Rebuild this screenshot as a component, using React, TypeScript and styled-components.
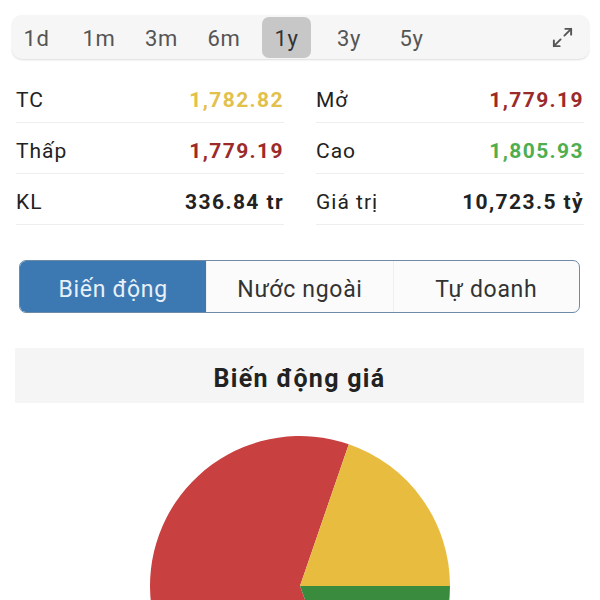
import React, { useState } from "react";
import styled, { createGlobalStyle } from "styled-components";
import { Maximize2 } from "lucide-react";

const Global = createGlobalStyle`
  html, body { margin: 0; padding: 0; background: #ffffff; }
  body { font-family: Roboto, "Noto Sans", Arial, sans-serif; color: #222; }
  * { box-sizing: border-box; }
`;

const Page = styled.div`
  width: 600px;
  padding-top: 15px;
  display: flex;
  flex-direction: column;
`;

const PeriodBar = styled.div`
  margin: 0 11px 0 12px;
  height: 44px;
  display: flex;
  align-items: center;
  gap: 13.5px;
  padding: 0 15px 0 0;
  background: #f6f6f6;
  border-radius: 10px;
  box-shadow: 0 1px 2px rgba(0, 0, 0, 0.14);
`;

const PeriodItem = styled.div<{ $active?: boolean }>`
  width: 49px;
  height: 41px;
  display: flex;
  align-items: center;
  justify-content: center;
  padding-top: 2px;
  font-size: 22px;
  letter-spacing: 0.6px;
  color: ${(p) => (p.$active ? "#333" : "#555")};
  background: ${(p) => (p.$active ? "#c7c7c7" : "transparent")};
  border-radius: 7px;
`;

const ExpandButton = styled.div`
  margin-left: auto;
  display: flex;
  align-items: center;
  color: #555;
`;

const Stats = styled.div`
  margin-top: 13px;
  padding: 0 16px;
  display: grid;
  grid-template-columns: 1fr 1fr;
  column-gap: 32px;
`;

const StatRow = styled.div`
  height: 51px;
  padding-top: 5px;
  display: flex;
  align-items: center;
  justify-content: space-between;
  border-bottom: 1px solid #eeeeee;
  font-size: 21px;
  letter-spacing: 1px;
`;

const StatLabel = styled.span`
  color: #222;
`;

const StatValue = styled.span<{ $color: string }>`
  color: ${(p) => p.$color};
  font-weight: 700;
  letter-spacing: 1.4px;
`;

const Tabs = styled.div`
  margin: 35px 20px 0 19px;
  height: 53px;
  display: grid;
  grid-template-columns: repeat(3, 1fr);
  border: 1px solid #6d8ba6;
  border-radius: 7px;
  overflow: hidden;
  background: #fbfbfb;
`;

const Tab = styled.div<{ $active?: boolean }>`
  display: flex;
  align-items: center;
  justify-content: center;
  font-size: 23px;
  letter-spacing: 0.7px;
  padding-top: 6px;
  color: ${(p) => (p.$active ? "#e8f0f8" : "#333")};
  background: ${(p) => (p.$active ? "#3c79b3" : "transparent")};
  & + & {
    border-left: 1px solid #efefef;
  }
`;

const SectionHeader = styled.div`
  margin: 35px 16px 0 15px;
  height: 55px;
  padding-top: 5px;
  display: flex;
  align-items: center;
  justify-content: center;
  background: #f5f5f5;
  font-size: 25px;
  font-weight: 700;
  letter-spacing: 1.3px;
  color: #222;
`;

const ChartWrap = styled.div`
  margin-top: 33px;
  display: flex;
  justify-content: center;
`;

const periods = ["1d", "1m", "3m", "6m", "1y", "3y", "5y"];

const stats: { label: string; value: string; color: string }[] = [
  { label: "TC", value: "1,782.82", color: "#e2c04c" },
  { label: "Mở", value: "1,779.19", color: "#9b2b2b" },
  { label: "Thấp", value: "1,779.19", color: "#9b2b2b" },
  { label: "Cao", value: "1,805.93", color: "#4fae4f" },
  { label: "KL", value: "336.84 tr", color: "#222" },
  { label: "Giá trị", value: "10,723.5 tỷ", color: "#222" },
];

export default function App() {
  const [period, setPeriod] = useState("1y");
  const [tab, setTab] = useState(0);
  return (
    <Page>
      <Global />
      <PeriodBar>
        {periods.map((p) => (
          <PeriodItem key={p} $active={p === period} onClick={() => setPeriod(p)}>
            {p}
          </PeriodItem>
        ))}
        <ExpandButton>
          <Maximize2 size={23} strokeWidth={2} />
        </ExpandButton>
      </PeriodBar>
      <Stats>
        {stats.map((c) => (
          <StatRow key={c.label}>
            <StatLabel>{c.label}</StatLabel>
            <StatValue $color={c.color}>{c.value}</StatValue>
          </StatRow>
        ))}
      </Stats>
      <Tabs>
        {["Biến động", "Nước ngoài", "Tự doanh"].map((t, i) => (
          <Tab key={t} $active={i === tab} onClick={() => setTab(i)}>
            {t}
          </Tab>
        ))}
      </Tabs>
      <SectionHeader>Biến động giá</SectionHeader>
      <ChartWrap>
        <svg width="300" height="300" viewBox="0 0 300 300">
          <path d="M150,150 L201.3,291 A150,150 0 1 1 198.8,8.2 Z" fill="#c84040" />
          <path d="M150,150 L198.8,8.2 A150,150 0 0 1 300,150 Z" fill="#e7bc3f" />
          <path d="M150,150 L300,150 A150,150 0 0 1 201.3,291 Z" fill="#3b8b3f" />
        </svg>
      </ChartWrap>
    </Page>
  );
}
